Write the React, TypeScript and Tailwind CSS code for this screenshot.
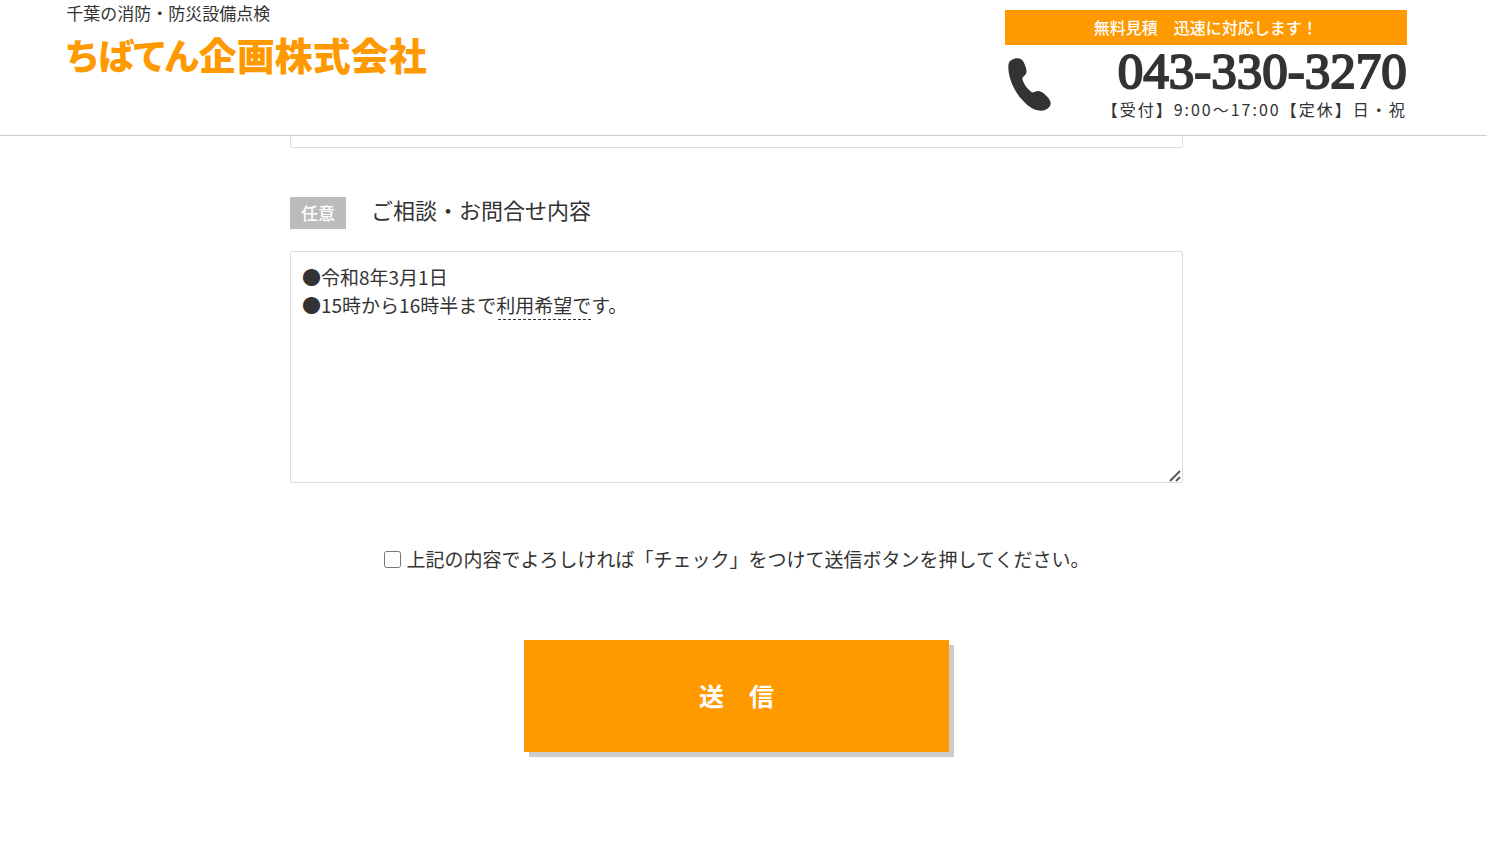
import { useState } from "react";

function PhoneIcon() {
  return (
    <svg viewBox="0 0 127 158" className="mt-[13px] ml-[3px] h-[53px] w-[43px] shrink-0" fill="currentColor" aria-hidden="true">
      <path d="M10 6C17 1 28 0 35 2C42 4 46 10 49 19C52 27 56 35 54 44C52 53 43 54 42 62C44 74 57 93 71 103C79 102 84 97 93 99C103 101 110 109 117 116C124 123 128 132 126 139C123 149 111 156 100 157C86 158 70 151 57 140C33 120 12 87 4 55C0 38 -1 20 3 13C5 9 7 8 10 6Z" />
    </svg>
  );
}

function ResizeGrip() {
  return (
    <svg
      viewBox="0 0 12 12"
      className="pointer-events-none absolute right-[2px] bottom-[1px] size-3"
      fill="none"
      stroke="#555"
      strokeWidth="1.8"
      aria-hidden="true"
    >
      <path d="M1 11L11 1M7 11L11 7" />
    </svg>
  );
}

function Header() {
  return (
    <header className="fixed inset-x-0 top-0 z-10 border-b border-[#ccc] bg-white pr-[14px]">
      <div className="mx-auto flex w-[91%] items-start justify-between pb-3">
        <div className="pt-px">
          <p className="text-[17px] leading-6">千葉の消防・防災設備点検</p>
          <a
            href="#top"
            className="block text-[38px] leading-[58px] font-black text-[#f90] [font-feature-settings:'palt']"
          >
            <span className="text-[36px]">ちばてん</span>企画株式会社
          </a>
        </div>
        <div className="w-[402px] pt-[10px]">
          <p className="bg-[#f90] text-center text-base leading-[35px] font-medium text-white">
            無料見積　迅速に対応します！
          </p>
          <div className="flex justify-between">
            <PhoneIcon />
            <div className="text-right">
              <a
                href="tel:043-330-3270"
                className="block pt-px font-['Liberation_Serif',serif] text-[51px] leading-[50px] [-webkit-text-stroke:2px_#333]"
              >
                043-330-3270
              </a>
              <p className="text-base leading-[27px] tracking-[2px]">【受付】9:00～17:00【定休】日・祝</p>
            </div>
          </div>
        </div>
      </div>
    </header>
  );
}

export default function App() {
  const [message, setMessage] = useState("●令和8年3月1日\n●15時から16時半まで利用希望です。");
  const [agreed, setAgreed] = useState(false);

  return (
    <div id="top" className="bg-white font-['Noto_Sans_CJK_JP',sans-serif] text-[#333]">
      <Header />
      <main className="pt-[100px] pr-[14px] pb-16">
        <form className="mx-auto w-[893px] max-w-full" onSubmit={(e) => e.preventDefault()}>
          <input type="text" aria-label="お名前" className="block h-12 w-full rounded-[2px] border border-[#ddd] px-[11px] text-[19px]" />

          <div className="mt-[49px] flex items-start gap-[25px]">
            <span className="w-14 bg-[#bbb] text-center text-[17px] leading-8 font-medium text-white">任意</span>
            <label htmlFor="message" className="text-[22px] leading-6">
              ご相談・お問合せ内容
            </label>
          </div>

          <div className="relative mt-[22px]">
            <textarea
              id="message"
              value={message}
              onChange={(e) => setMessage(e.target.value)}
              spellCheck={false}
              className="block h-[232px] w-full resize-y rounded-[2px] border border-[#ddd] px-[11px] py-[11px] text-[19px] leading-7 [&::-webkit-resizer]:bg-transparent"
            />
            <span aria-hidden="true" className="pointer-events-none absolute top-[68px] left-[208px] w-[93px] border-b border-dashed border-[#333]" />
            <ResizeGrip />
          </div>

          <label className="mt-[62px] flex items-center justify-center gap-[6px] text-[19px] leading-7">
            <input
              type="checkbox"
              checked={agreed}
              onChange={(e) => setAgreed(e.target.checked)}
              className="size-[17px] shrink-0"
            />
            上記の内容でよろしければ「チェック」をつけて送信ボタンを押してください。
          </label>

          <button
            type="submit"
            className="mx-auto mt-[67px] block h-28 w-[425px] max-w-full bg-[#f90] text-[25px] font-bold text-white shadow-[5px_5px_0_#ccc]"
          >
            送　信
          </button>
        </form>
      </main>
    </div>
  );
}
